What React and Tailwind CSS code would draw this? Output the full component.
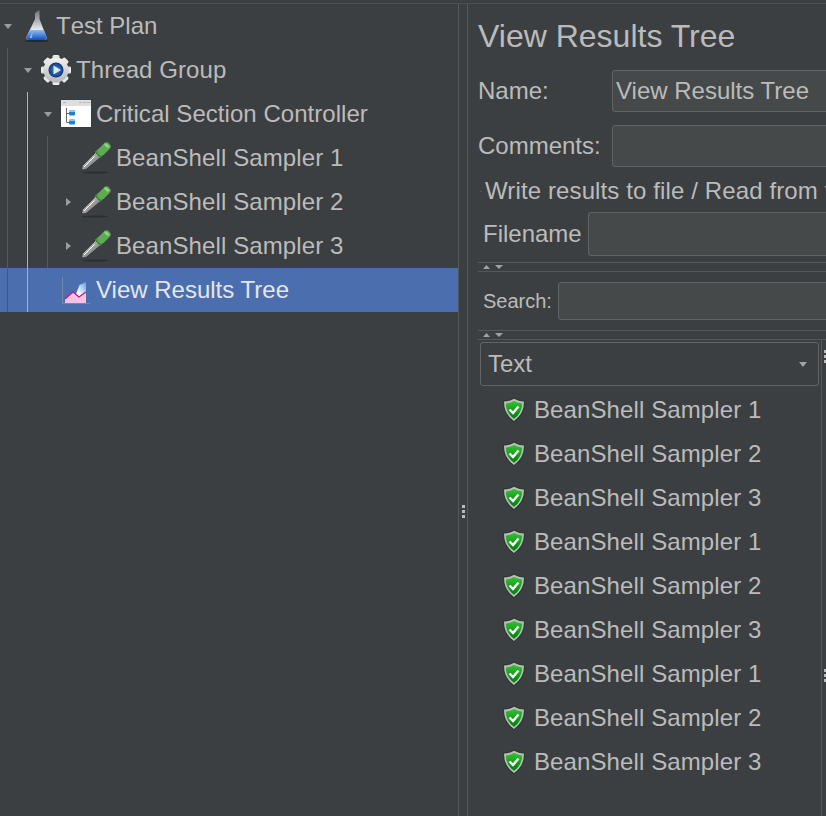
const treeRows = [
  { label: "Test Plan", icon: "flask", arrow: "down", guides: [], text: "[font-kerning:none]" },
  { label: "Thread Group", icon: "gear", arrow: "down", guides: ["gray"], text: "tracking-[0.08px]" },
  { label: "Critical Section Controller", icon: "window", arrow: "down", guides: ["gray", "blue"], text: "tracking-[0.04px]" },
  { label: "BeanShell Sampler 1", icon: "dropper", guides: ["gray", "blue", "gray"], text: "tracking-[0.11px]" },
  { label: "BeanShell Sampler 2", icon: "dropper", arrow: "right", guides: ["gray", "blue", "gray"], text: "tracking-[0.11px]" },
  { label: "BeanShell Sampler 3", icon: "dropper", arrow: "right", guides: ["gray", "blue", "gray"], text: "tracking-[0.11px]" },
  { label: "View Results Tree", icon: "graph", guides: ["gray", "blue"], selected: true, text: "" },
];

const results = [1, 2, 3, 1, 2, 3, 1, 2, 3];

function Flask() {
  return (
    <svg width="32" height="32" viewBox="0 0 32 32">
      <defs>
        <linearGradient id="liquid" x1="0" y1="0" x2="0" y2="1">
          <stop offset="0" stopColor="#8fbdf0" />
          <stop offset="1" stopColor="#0b4fc4" />
        </linearGradient>
        <linearGradient id="flaskGlass" x1="0" y1="0" x2="0" y2="1">
          <stop offset="0" stopColor="#6d7278" />
          <stop offset="0.35" stopColor="#aab0b6" />
          <stop offset="0.65" stopColor="#e6eaee" />
        </linearGradient>
      </defs>
      <ellipse cx="16.5" cy="31" rx="12" ry="1" fill="#242628" />
      <path d="M15 3 L19.5 0 L19.5 9 L26.5 27 Q27 30 24 30 L9 30 Q6 30 6.5 27 L15 9 Z" fill="url(#flaskGlass)" />
      <path d="M9.8 20 L23.8 20 L26.5 27 Q27 30 24 30 L9 30 Q6 30 6.5 27 Z" fill="url(#liquid)" />
      <path d="M12.5 22 L12 28 L9.5 28 Z" fill="#b9d6f5" opacity="0.7" />
    </svg>
  );
}

function Gear() {
  const teeth = [0, 45, 90, 135, 180, 225, 270, 315];
  return (
    <svg width="32" height="32" viewBox="0 0 32 32">
      <defs>
        <linearGradient id="gearFill" x1="0" y1="0" x2="0" y2="1">
          <stop offset="0" stopColor="#f4f4f4" />
          <stop offset="1" stopColor="#b4b6b8" />
        </linearGradient>
        <radialGradient id="gearBlue">
          <stop offset="0" stopColor="#4a86d4" />
          <stop offset="0.75" stopColor="#1d4f96" />
          <stop offset="1" stopColor="#0f2f63" />
        </radialGradient>
      </defs>
      {teeth.map((deg) => (
        <rect key={deg} x="12.5" y="1" width="7" height="7" rx="1.5" fill="url(#gearFill)" transform={`rotate(${deg} 16 16)`} />
      ))}
      <circle cx="16" cy="16" r="12.5" fill="url(#gearFill)" />
      <circle cx="16" cy="16" r="7.5" fill="url(#gearBlue)" />
      <path d="M13.5 11.5 L21 16 L13.5 20.5 Z" fill="#dbe7f7" />
    </svg>
  );
}

function TreeWindow() {
  return (
    <svg width="32" height="32" viewBox="0 0 32 32">
      <rect x="0.5" y="1.5" width="31" height="28" fill="#2c2e30" opacity="0.5" />
      <rect x="1" y="2" width="30" height="27" fill="#ffffff" />
      <rect x="1" y="2" width="30" height="6" fill="#dedede" />
      <rect x="3" y="4" width="3" height="1" fill="#b5b5b5" />
      <rect x="19" y="4" width="3" height="1" fill="#b5b5b5" />
      <rect x="23" y="4" width="3" height="1" fill="#b5b5b5" />
      <rect x="27" y="4" width="3" height="1" fill="#b5b5b5" />
      <path d="M6.5 10 V24.5 H10 M6.5 15.5 H10" stroke="#666666" fill="none" />
      <rect x="9" y="12.5" width="6" height="5" rx="1" fill="#1c7fd8" />
      <rect x="9" y="21.5" width="6" height="5" rx="1" fill="#1c7fd8" />
      <rect x="9" y="12.5" width="6" height="1.5" fill="#8cc4f2" />
      <rect x="9" y="21.5" width="6" height="1.5" fill="#8cc4f2" />
    </svg>
  );
}

function Dropper() {
  return (
    <svg width="32" height="34" viewBox="0 0 32 34">
      <defs>
        <linearGradient id="glass" x1="0" y1="0" x2="1" y2="1">
          <stop offset="0" stopColor="#eeeeee" />
          <stop offset="1" stopColor="#4f4f4f" />
        </linearGradient>
      </defs>
      <ellipse cx="15" cy="31.5" rx="13" ry="1" fill="#2c2e30" />
      <path d="M1.5 29 L2.5 24.5 L15.5 11.5 L20.5 16.5 L6 28.5 Z" fill="url(#glass)" stroke="#26282a" strokeWidth="0.7" />
      <path d="M4 26 L14.5 15.5" stroke="#ffffff" strokeWidth="1" />
      <path d="M14.5 11 L18 8 L23.5 13.5 L20.5 17 Z" fill="#3f8a38" />
      <path d="M21.5 10.5 L26.5 5.5" stroke="#5fab54" strokeWidth="8" strokeLinecap="round" />
      <path d="M25.5 3.5 L28 5.5" stroke="#93d684" strokeWidth="2.4" strokeLinecap="round" />
    </svg>
  );
}

function Graph() {
  return (
    <svg width="32" height="32" viewBox="0 0 32 32">
      <defs>
        <linearGradient id="graphBlue" x1="0" y1="1" x2="1" y2="0">
          <stop offset="0.3" stopColor="#f0f6fe" />
          <stop offset="1" stopColor="#5f9bea" />
        </linearGradient>
      </defs>
      <path d="M2.5 3 V29.5 H30" stroke="#7387a8" fill="none" />
      <path d="M16 20 L19.5 11 L26 8 L26 18 L19 23 Z" fill="url(#graphBlue)" />
      <path d="M5 25 L13 18 L19 23 L26 18 L26 29 L5 29 Z" fill="#fbc0e6" />
      <path d="M5 25 L13 18 L19 23 L26 18" stroke="#c2187f" strokeWidth="1.2" fill="none" />
    </svg>
  );
}

function Shield() {
  return (
    <svg width="24" height="26" viewBox="0 0 24 26">
      <defs>
        <linearGradient id="shieldGreen" x1="0" y1="0" x2="0" y2="1">
          <stop offset="0" stopColor="#2ec42e" />
          <stop offset="1" stopColor="#067a12" />
        </linearGradient>
      </defs>
      <path d="M12 0.5 Q17 3.5 23 3.5 Q24 17 12 25.5 Q0 17 1 3.5 Q7 3.5 12 0.5 Z" fill="#2b3a2e" />
      <path d="M12 1.8 Q17 4.6 21.9 4.6 Q22.5 16.5 12 24 Q1.5 16.5 2.1 4.6 Q7 4.6 12 1.8 Z" fill="#b7beb8" />
      <path d="M12 4 Q16.5 6.4 20 6.4 Q20.4 15.5 12 21.8 Q3.6 15.5 4 6.4 Q7.5 6.4 12 4 Z" fill="url(#shieldGreen)" />
      <path d="M7.5 12.5 L11 16 L16.5 9.5" stroke="#ffffff" strokeWidth="2.4" fill="none" />
    </svg>
  );
}

const icons = { flask: Flask, gear: Gear, window: TreeWindow, dropper: Dropper, graph: Graph };

function TreeRow({ row }) {
  const Icon = icons[row.icon];
  return (
    <div className={`flex h-11 items-center pl-1 ${row.selected ? "bg-[#4b6eaf] text-[#e4e6ea]" : ""}`}>
      {row.guides.length > 0 && (
        <div className="ml-[3px] mr-[-3px] flex h-full">
          {row.guides.map((g, i) => (
            <div key={i} className={`h-full w-5 border-l ${g === "blue" ? "border-[#8cbce4]" : "border-[#55585a]"}`} />
          ))}
        </div>
      )}
      <div className="flex w-4 shrink-0 items-center">
        {row.arrow === "down" && (
          <svg width="8" height="5" viewBox="0 0 8 5"><path d="M0 0 H8 L4 5 Z" fill="#9a9c9e" /></svg>
        )}
        {row.arrow === "right" && (
          <svg className="ml-0.5" width="5" height="8" viewBox="0 0 5 8"><path d="M0 0 V8 L5 4 Z" fill="#9a9c9e" /></svg>
        )}
      </div>
      <div className="flex h-8 w-8 shrink-0 items-center">
        <Icon />
      </div>
      <span className={`ml-1 whitespace-nowrap ${row.text}`}>{row.label}</span>
    </div>
  );
}

function SplitBar() {
  return (
    <div className="flex h-[10px] items-center gap-[5px] border-y border-[#55585a] pl-[5px]">
      <svg width="7" height="4" viewBox="0 0 7 4"><path d="M0 4 H7 L3.5 0 Z" fill="#a0a2a4" /></svg>
      <svg width="8" height="4" viewBox="0 0 8 4"><path d="M0 0 H8 L4 4 Z" fill="#a0a2a4" /></svg>
    </div>
  );
}

function Dots({ className }) {
  return (
    <div className={`flex flex-col gap-[2px] ${className}`}>
      <div className="h-[3px] w-[3px] bg-[#bbbbbb]" />
      <div className="h-[3px] w-[3px] bg-[#bbbbbb]" />
      <div className="h-[3px] w-[3px] bg-[#bbbbbb]" />
    </div>
  );
}

function TextInput({ value, className }) {
  return (
    <div className={`flex flex-1 items-center rounded-[3px] border border-[#646464] bg-[#45494a] pl-[3px] ${className}`}>
      {value}
    </div>
  );
}

export default function App() {
  return (
    <div className="h-[816px] w-[826px] overflow-hidden bg-[#3c3f41] pt-[3px] text-[24px] leading-none text-[#bbbbbb] [font-family:'Liberation_Sans',Arial,sans-serif]">
      <div className="flex h-full border-t border-[#4c4f51]">
        {/* tree */}
        <div className="w-[458px] shrink-0">
          {treeRows.map((row) => (
            <TreeRow key={row.label} row={row} />
          ))}
        </div>

        {/* splitter */}
        <div className="flex w-[10px] shrink-0 items-center justify-center border-x border-[#55585a]">
          <Dots className="mt-[203px]" />
        </div>

        {/* details */}
        <div className="w-[358px] shrink-0 overflow-hidden">
          <div className="w-[700px] pl-[10px]">
            <div className="flex h-[66px] items-center pb-[3px] text-[32px]">View Results Tree</div>

            <div className="flex h-[42px] items-center">
              <span className="w-[134px] shrink-0">Name:</span>
              <TextInput value="View Results Tree" className="h-full" />
            </div>
            <div className="mt-[13px] flex h-[42px] items-center">
              <span className="w-[134px] shrink-0">Comments:</span>
              <TextInput className="h-full" />
            </div>

            <div className="mt-[11px] flex h-[26px] items-center whitespace-nowrap tracking-[0.12px]">
              <div className="ml-[2px] mr-[3px] h-px w-[2px] bg-[#55585a]" />
              Write results to file / Read from file
            </div>

            <div className="mt-[8px] flex h-11 items-center pl-[5px]">
              <span className="w-[105px] shrink-0">Filename</span>
              <TextInput className="h-full" />
            </div>

            <div className="mt-[6px]"><SplitBar /></div>

            <div className="mt-[10px] flex h-[38px] items-center pl-[5px] text-[20px]">
              <span className="w-[75px] shrink-0">Search:</span>
              <TextInput className="h-full" />
            </div>

            <div className="mt-[10px]"><SplitBar /></div>

            <div className="flex">
              <div className="w-[343px] shrink-0 pl-[2px] pt-[2px]">
                <div className="flex h-11 w-[339px] items-center justify-between rounded-[3px] border border-[#646464] pl-[7px] pr-[11px]">
                  Text
                  <svg width="8" height="5" viewBox="0 0 8 5"><path d="M0 0 H8 L4 5 Z" fill="#a0a2a4" /></svg>
                </div>
                <div className="mt-[2px] pl-[22px]">
                  {results.map((n, i) => (
                    <div key={i} className="flex h-11 items-center">
                      <Shield />
                      <span className="ml-[8px] whitespace-nowrap tracking-[0.11px]">BeanShell Sampler {n}</span>
                    </div>
                  ))}
                </div>
              </div>
              <div className="h-[480px] border-l border-[#55585a] pl-[2px]">
                <Dots className="mt-[10px]" />
                <Dots className="mt-[306px]" />
              </div>
            </div>
          </div>
        </div>
      </div>
    </div>
  );
}
